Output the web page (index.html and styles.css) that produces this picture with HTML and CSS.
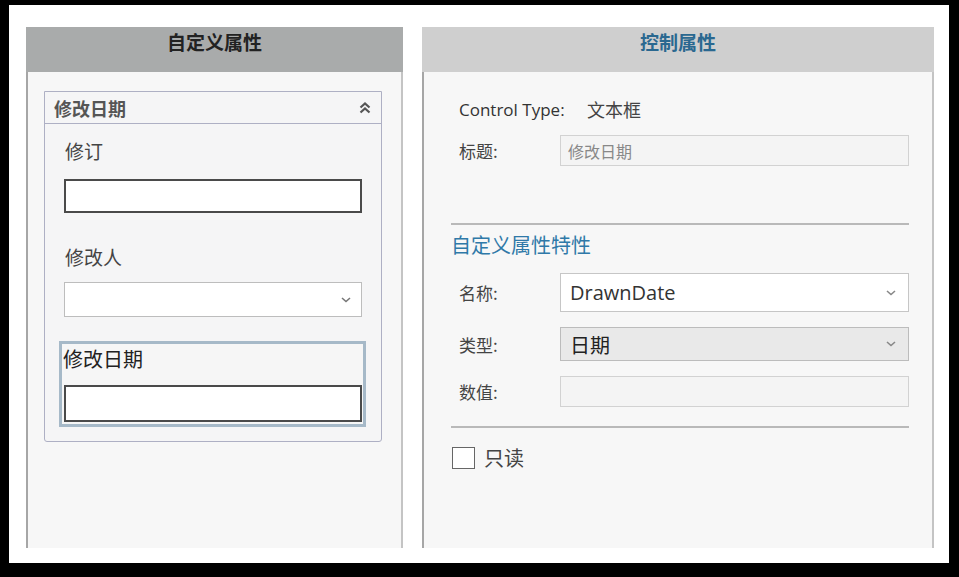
FILE: index.html
```html
<!DOCTYPE html>
<html lang="zh">
<head>
<meta charset="utf-8">
<title>属性</title>
<link rel="stylesheet" href="styles.css">
</head>
<body>
<div class="screen">
  <section class="panel panel-left">
    <div class="panel-head head-dark">自定义属性</div>
    <div class="group">
      <div class="group-head">
        <span>修改日期</span>
        <svg class="dchev" width="14" height="14" viewBox="0 0 14 14"><path d="M2.5 6.5 L7 2.5 L11.5 6.5 M2.5 11.5 L7 7.5 L11.5 11.5" fill="none" stroke="#555" stroke-width="2.2"/></svg>
      </div>
      <div class="group-body">
        <div class="fld-label">修订</div>
        <div class="txt dark"></div>
        <div class="fld-label second">修改人</div>
        <div class="txt light sel">
          <svg class="chev" width="10" height="6" viewBox="0 0 10 6"><path d="M1 1 L5 4.5 L9 1" fill="none" stroke="#777" stroke-width="1.6"/></svg>
        </div>
        <div class="focus">
          <div class="focus-label">修改日期</div>
          <div class="txt dark focus-input"></div>
        </div>
      </div>
    </div>
  </section>
  <section class="panel panel-right">
    <div class="panel-head head-light">控制属性</div>
    <div class="right-body">
      <div class="row type-row"><span class="lbl">Control Type:</span><span class="val">文本框</span></div>
      <div class="row"><span class="lbl">标题:</span><div class="box disabled">修改日期</div></div>
      <hr class="divider first">
      <div class="section-title">自定义属性特性</div>
      <div class="row name-row"><span class="lbl">名称:</span><div class="box combo white"><span class="latin">DrawnDate</span><svg class="chev" width="10" height="6" viewBox="0 0 10 6"><path d="M1 1 L5 4.5 L9 1" fill="none" stroke="#888" stroke-width="1.6"/></svg></div></div>
      <div class="row kind-row"><span class="lbl">类型:</span><div class="box combo gray"><span>日期</span><svg class="chev" width="10" height="6" viewBox="0 0 10 6"><path d="M1 1 L5 4.5 L9 1" fill="none" stroke="#888" stroke-width="1.6"/></svg></div></div>
      <div class="row value-row"><span class="lbl">数值:</span><div class="box disabled empty"></div></div>
      <hr class="divider second">
      <label class="check"><span class="checkbox"></span><span>只读</span></label>
    </div>
  </section>
</div>
</body>
</html>
```

FILE: styles.css
```css
* { box-sizing: border-box; }
html, body { margin: 0; padding: 0; background: #000; }
body {
  font-family: "Open Sans", "Noto Sans CJK SC", sans-serif;
  color: #333;
  width: 959px;
  height: 577px;
  overflow: hidden;
}
.screen {
  margin: 5px 10px 0 9px;
  width: 940px;
  height: 558px;
  background: #fff;
  padding: 22px 15px 15px 17px;
  display: flex;
  gap: 19px;
}
.panel {
  background: #f7f7f7;
  border-left: 2px solid #a6a6a6;
  border-right: 2px solid #c4c4c4;
  display: flex;
  flex-direction: column;
}
.panel-left { width: 377px; }
.panel-right { width: 512px; }
.panel-head {
  height: 45px;
  display: flex;
  align-items: center;
  justify-content: center;
  font-family: "Noto Sans CJK SC", sans-serif;
  font-weight: 700;
  font-size: 19px;
  padding-bottom: 16px;
  margin: 0 -2px;
}
.head-dark { background: #a9abab; color: #222; }
.head-light { background: #cfcfcf; color: #2a6890; }

.group {
  margin: 19px 0 0 16px;
  width: 338px;
  height: 351px;
  border: 1px solid #aeb0c4;
  border-radius: 0 0 3px 3px;
  background: #f5f5f6;
}
.group-head {
  height: 32px;
  border-bottom: 1px solid #aeb0c4;
  display: flex;
  align-items: center;
  justify-content: space-between;
  padding: 0 9px 0 9px;
  font-family: "Noto Sans CJK SC", sans-serif;
  font-weight: 700;
  font-size: 18px;
  color: #555;
}
.dchev { margin-top: 1px; }
.group-body { padding: 15px 19px 0 19px; }
.fld-label {
  font-family: "Noto Sans CJK SC", sans-serif;
  font-size: 19px;
  color: #444;
  line-height: 24px;
  height: 24px;
  padding-left: 1px;
}
.fld-label.second { margin-top: 32px; }
.txt { height: 34px; background: #fff; margin-top: 16px; }
.txt.dark { border: 2px solid #4a4a4a; }
.txt.light { border: 1px solid #bdbdbd; }
.sel { display: flex; align-items: center; justify-content: flex-end; padding-right: 10px; margin-top: 13px; height: 35px; }
.focus {
  margin: 24px -4px 0 -5px;
  height: 86px;
  border: 3px solid #a6b9c8;
  padding: 0 1px 0 2px;
  background: #f6f6f6;
}
.focus-label {
  font-family: "Noto Sans CJK SC", sans-serif;
  font-size: 20px;
  color: #222;
  line-height: 26px;
  margin-top: 2px;
  margin-left: -1px;
}
.focus-input { margin-top: 13px; height: 37px; border-width: 2px 1px 2px 1px; border-color: #4e4e55; }

.right-body { padding: 24px 23px 0 27px; }
.row {
  display: grid;
  grid-template-columns: 101px 1fr;
  align-items: center;
  padding-left: 8px;
}
.lbl {
  font-family: "Noto Sans CJK SC", sans-serif;
  font-size: 17px;
  color: #444;
}
.type-row { grid-template-columns: 128px 1fr; height: 24px; margin-bottom: 15px; }
.type-row .lbl { font-family: "Open Sans", "Noto Sans CJK SC", sans-serif; color: #333; font-size: 17px; }
.val { font-family: "Noto Sans CJK SC", sans-serif; font-size: 18px; color: #444; }
.box {
  height: 31px;
  border: 1px solid #d2d2d2;
  font-family: "Noto Sans CJK SC", sans-serif;
}
.disabled {
  background: #f4f4f4;
  color: #888;
  font-size: 16px;
  padding-left: 7px;
  display: flex;
  align-items: center;
}
.divider { border: 0; border-top: 2px solid #b9b9b9; margin: 0; }
.divider.first { margin-top: 57px; }
.section-title {
  font-family: "Noto Sans CJK SC", sans-serif;
  font-size: 20px;
  color: #2f79a8;
  margin-top: 7px;
  line-height: 26px;
}
.combo {
  display: flex;
  align-items: center;
  justify-content: space-between;
  padding: 0 12px 0 9px;
  border-color: #c6c6c6;
}
.combo.white { background: #fff; height: 39px; font-size: 20px; color: #333; }
.latin { font-family: "Open Sans", sans-serif; }
.combo.gray { background: #e9e9e9; height: 34px; font-size: 20px; color: #222; border-color: #bcbcbc; }
.name-row { margin-top: 15px; }
.kind-row { margin-top: 15px; }
.value-row { margin-top: 15px; }
.box.empty { height: 31px; }
.divider.second { margin-top: 19px; }
.check {
  display: flex;
  align-items: center;
  gap: 9px;
  margin-top: 15px;
  font-family: "Noto Sans CJK SC", sans-serif;
  font-size: 20px;
  color: #444;
}
.checkbox {
  width: 23px;
  height: 22px;
  border: 1.5px solid #666;
  background: #fff;
  display: inline-block;
  margin-left: 1px;
}
```
